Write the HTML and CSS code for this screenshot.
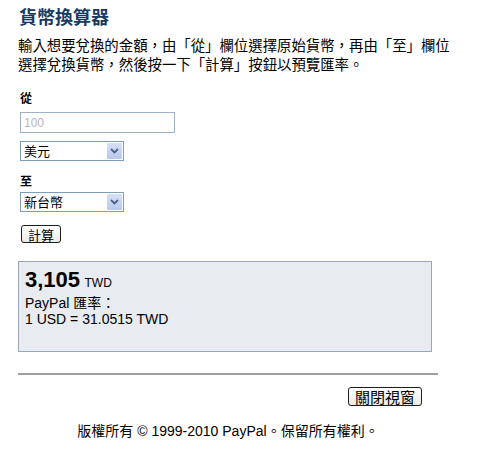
FILE: index.html
```html
<!DOCTYPE html>
<html lang="zh-TW">
<head>
    <meta charset="UTF-8">
    <meta name="viewport" content="width=device-width, initial-scale=1.0">
    <title>貨幣換算器</title>
    <link rel="stylesheet" href="styles.css">
</head>
<body>

    <div class="container">
        <h1>貨幣換算器</h1>
        <p class="intro">輸入想要兌換的金額，由「從」欄位選擇原始貨幣，再由「至」欄位<br>選擇兌換貨幣，然後按一下「計算」按鈕以預覽匯率。</p>

        <label for="amount" class="field-label from-label">從</label>
        <input type="text" id="amount" class="amount" placeholder="100">

        <span class="select-wrap from-select">
            <select id="from-currency">
                <option value="USD">美元</option>
                <option value="TWD">新台幣</option>
            </select>
            <span class="select-arrow">
                <svg width="9" height="6" viewBox="0 0 9 6"><path d="M1 1 L4.5 4.5 L8 1" fill="none" stroke="#4d6185" stroke-width="1.8"/></svg>
            </span>
        </span>

        <label for="to-currency" class="field-label to-label">至</label>
        <span class="select-wrap to-select">
            <select id="to-currency">
                <option value="TWD">新台幣</option>
                <option value="USD">美元</option>
            </select>
            <span class="select-arrow">
                <svg width="9" height="6" viewBox="0 0 9 6"><path d="M1 1 L4.5 4.5 L8 1" fill="none" stroke="#4d6185" stroke-width="1.8"/></svg>
            </span>
        </span>

        <button class="btn calc-btn">計算</button>

        <div class="result">
            <div class="result-amount"><strong>3,105</strong> <span class="unit">TWD</span></div>
            <div class="result-line">PayPal 匯率：</div>
            <div class="result-line">1 USD = 31.0515 TWD</div>
        </div>

        <hr class="divider">

        <div class="close-row">
            <button class="btn close-btn">關閉視窗</button>
        </div>

        <p class="footer">版權所有 © 1999-2010 PayPal。保留所有權利。</p>
    </div>

</body>
</html>
```

FILE: styles.css
```css
body {
    margin: 0;
    padding: 0;
    font-family: "Liberation Sans", Arial, "Noto Sans CJK TC", sans-serif;
    background-color: #fff;
    color: #000;
}
.container {
    display: flex;
    flex-direction: column;
    align-items: flex-start;
    width: 440px;
    padding: 4px 0 0 18px;
}
h1 {
    margin: 0 0 7px 1px;
    font-size: 18px;
    line-height: 24px;
    color: #183a60;
    font-family: "Noto Sans CJK TC", sans-serif;
    font-weight: bold;
}
.intro {
    margin: 0;
    font-family: "Noto Sans CJK TC", sans-serif;
    font-size: 14.4px;
    line-height: 19px;
    white-space: nowrap;
}
.field-label {
    font-family: "Noto Sans CJK TC", sans-serif;
    font-size: 12px;
    font-weight: bold;
    line-height: 16px;
    margin-left: 2px;
}
.from-label {
    margin-top: 17px;
}
.to-label {
    margin-top: 12px;
}
.amount {
    box-sizing: border-box;
    width: 155px;
    height: 21px;
    margin: 6px 0 0 2px;
    padding: 1px 3px;
    border: 1px solid #9eb0c4;
    font-family: "Liberation Sans", Arial, sans-serif;
    font-size: 12px;
}
.amount::placeholder {
    color: #b8b8b8;
}
.select-wrap {
    position: relative;
    display: inline-block;
    margin-left: 2px;
}
.from-select {
    margin-top: 8px;
}
.to-select {
    margin-top: 3px;
}
.select-wrap select {
    -webkit-appearance: none;
    appearance: none;
    box-sizing: border-box;
    width: 104px;
    height: 20px;
    padding: 0 0 0 3px;
    border: 1px solid #7f9db9;
    border-radius: 0;
    background: #fff;
    font-family: "Noto Sans CJK TC", sans-serif;
    font-size: 13px;
    line-height: 18px;
    color: #000;
}
.select-arrow {
    position: absolute;
    top: 2px;
    right: 2px;
    width: 15px;
    height: 16px;
    display: flex;
    align-items: center;
    justify-content: center;
    background: linear-gradient(#d6e0f7, #b7c8ef);
    border-radius: 1px;
    pointer-events: none;
}
.btn {
    box-sizing: border-box;
    height: 18px;
    padding: 0 5px;
    border: 1px solid #1c1c1c;
    border-radius: 3px;
    background: linear-gradient(#ffffff, #ecebe6);
    font-family: "Noto Sans CJK TC", sans-serif;
    font-size: 13px;
    line-height: 15px;
    color: #000;
    cursor: pointer;
}
.calc-btn {
    width: 40px;
    margin: 13px 0 0 3px;
}
.result {
    box-sizing: border-box;
    width: 414px;
    height: 91px;
    margin-top: 18px;
    padding: 6px 6px;
    border: 1px solid #98a6b8;
    background-color: #e8ebf0;
}
.result-amount {
    line-height: 23px;
}
.result-amount strong {
    font-size: 22px;
}
.unit {
    font-size: 12px;
}
.result-line {
    font-size: 14px;
    line-height: 16px;
}
.divider {
    width: 420px;
    height: 0;
    margin: 21px 0 0;
    border: none;
    border-top: 2px solid #a0a0a0;
}
.close-row {
    display: flex;
    justify-content: flex-end;
    width: 420px;
    margin-top: 12px;
}
.close-btn {
    width: 74px;
    height: 19px;
    margin-right: 16px;
    font-size: 15px;
    padding: 0 2px;
}
.footer {
    width: 420px;
    margin: 17px 0 0;
    text-align: center;
    font-size: 14px;
    line-height: 16px;
}
```
